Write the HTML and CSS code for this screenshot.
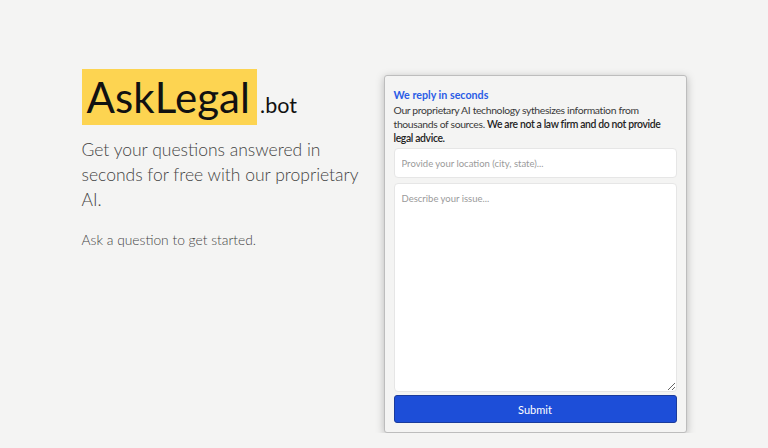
FILE: index.html
```html
<!DOCTYPE html>
<html>
<head>
<meta charset="utf-8">
<link rel="stylesheet" href="styles.css">
</head>
<body>
<main class="page">
  <section class="intro">
    <div class="brand">
      <span class="brand-name">AskLegal</span><span class="brand-tld">.bot</span>
    </div>
    <p class="lead">Get your questions answered in seconds for free with our proprietary AI.</p>
    <p class="hint">Ask a question to get started.</p>
  </section>
  <form class="card">
    <h2 class="card-title">We reply in seconds</h2>
    <p class="card-text">Our proprietary AI technology sythesizes information from thousands of sources. <strong>We are not a law firm and do not provide legal advice.</strong></p>
    <input class="field" type="text" placeholder="Provide your location (city, state)...">
    <textarea class="field area" placeholder="Describe your issue..."></textarea>
    <button class="submit" type="button">Submit</button>
  </form>
</main>
</body>
</html>
```

FILE: styles.css
```css
html, body {
  margin: 0;
  padding: 0;
  background: #f4f4f3;
  font-family: Lato, "Open Sans", sans-serif;
}
.page {
  width: 605px;
  margin: 0 auto;
  padding-top: 69px;
  display: flex;
  justify-content: space-between;
  align-items: flex-start;
}
.intro {
  width: 285px;
}
.brand {
  display: flex;
  align-items: baseline;
}
.brand-name {
  background: #fdd451;
  color: #111;
  font-size: 42px;
  line-height: 56px;
  padding: 0 7px 0 5px;
  letter-spacing: 0.1px;
}
.brand-tld {
  font-size: 21.5px;
  color: #111;
  margin-left: 3px;
}
.lead {
  margin: 12px 0 0;
  font-size: 17.5px;
  font-weight: 300;
  line-height: 25px;
  color: #444;
}
.hint {
  margin: 19px 0 0;
  font-size: 13.8px;
  font-weight: 300;
  color: #444;
}
.card {
  width: 303px;
  box-sizing: border-box;
  margin-top: 6px;
  padding: 12px 9px 9px;
  background: #f4f4f3;
  border: 1px solid #bdbdbd;
  border-radius: 3px;
  box-shadow: 0 2px 8px rgba(0,0,0,0.25);
  display: flex;
  flex-direction: column;
}
.card-title {
  margin: 0;
  font-size: 10.7px;
  font-weight: 700;
  color: #2a5ce6;
  line-height: 14px;
}
.card-text {
  margin: 1px 0 3px;
  font-size: 10.4px;
  letter-spacing: -0.35px;
  line-height: 14px;
  color: #3a3a3a;
}
.card-text strong {
  color: #222;
  font-weight: 600;
  letter-spacing: -0.35px;
}
.field {
  box-sizing: border-box;
  width: 100%;
  height: 30px;
  margin: 0;
  border: 1px solid #e6e6e6;
  border-radius: 4px;
  background: #fff;
  padding: 0 7px;
  font-family: inherit;
  font-size: 9.5px;
  color: #333;
  outline: none;
}
.field::placeholder {
  color: #9a9a9a;
}
.area {
  height: 209px;
  margin-top: 5px;
  padding: 9px 7px;
  resize: vertical;
}
.submit {
  margin-top: 3px;
  height: 28px;
  background: #1d4ed8;
  border: 1px solid #1a3b9c;
  border-radius: 3px;
  color: #fff;
  font-family: inherit;
  font-size: 11px;
}
```
